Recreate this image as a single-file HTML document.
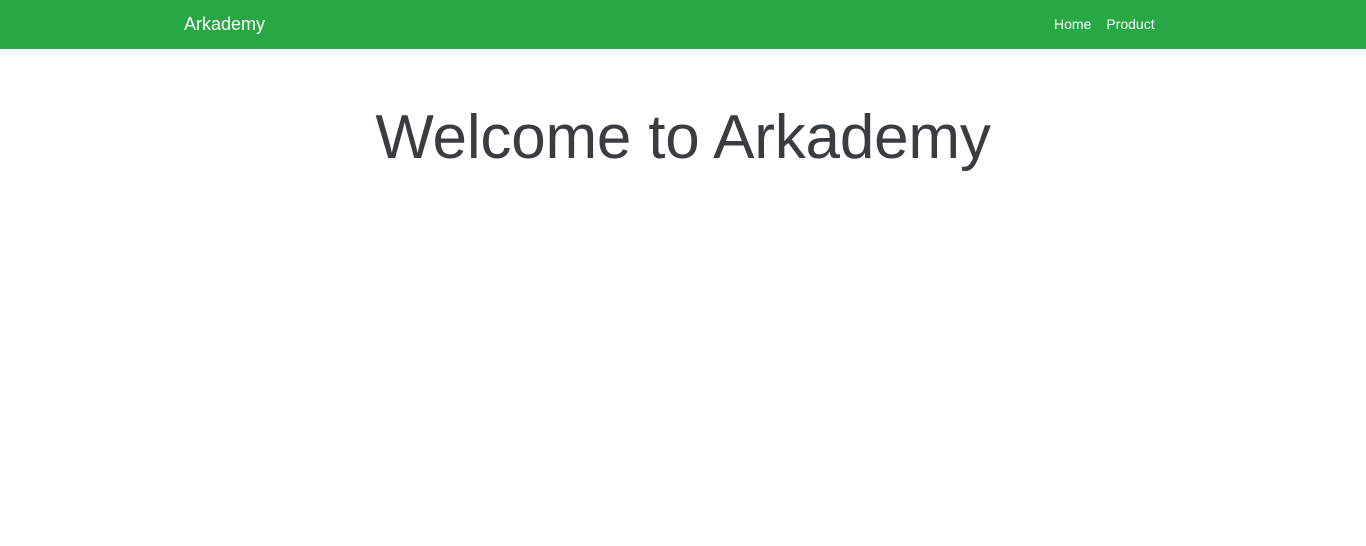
<!DOCTYPE html>
<html><head><style>
html,body{margin:0;padding:0;background:#fff;width:1366px;height:546px;overflow:hidden;font-family:"Liberation Sans",sans-serif}
nav{height:49px;background:#28a745;position:relative}
.brand{position:absolute;left:184px;top:14px;color:#fff;font-size:18px}
.links{position:absolute;left:1054px;top:16px;color:#fff;font-size:14px}
.links span{margin-right:15px}
h1{margin:0;position:absolute;top:102px;width:100%;text-align:center;font-weight:300;font-size:62px;color:#3a3d40;letter-spacing:-0.2px}
</style></head><body>
<nav><div class="brand">Arkademy</div><div class="links"><span>Home</span><span>Product</span></div></nav>
<h1>Welcome to Arkademy</h1>
</body></html>
